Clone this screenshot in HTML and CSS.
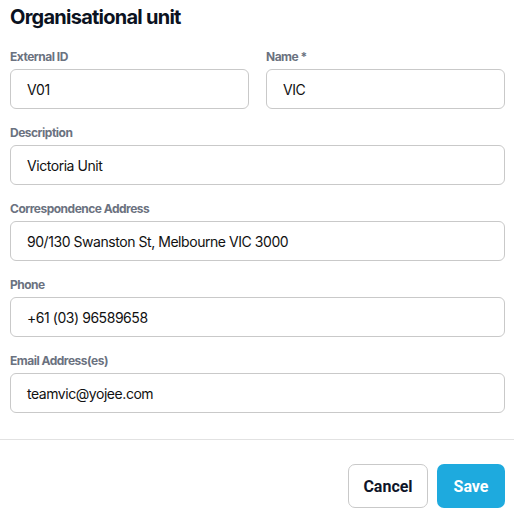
FILE: index.html
```
<!DOCTYPE html>
<html>
<head>
<meta charset="utf-8">
<link rel="stylesheet" href="styles.css">
</head>
<body>
<div class="form">
  <h1 class="title">Organisational unit</h1>
  <div class="row two">
    <div class="field">
      <label class="label">External ID</label>
      <div class="input">V01</div>
    </div>
    <div class="field">
      <label class="label">Name *</label>
      <div class="input">VIC</div>
    </div>
  </div>
  <div class="field">
    <label class="label">Description</label>
    <div class="input">Victoria Unit</div>
  </div>
  <div class="field">
    <label class="label">Correspondence Address</label>
    <div class="input">90/130 Swanston St, Melbourne VIC 3000</div>
  </div>
  <div class="field">
    <label class="label">Phone</label>
    <div class="input">+61 (03) 96589658</div>
  </div>
  <div class="field">
    <label class="label">Email Address(es)</label>
    <div class="input">teamvic@yojee.com</div>
  </div>
</div>
<div class="footer">
  <button class="btn cancel">Cancel</button>
  <button class="btn save">Save</button>
</div>
</body>
</html>
```
FILE: styles.css
```
html, body {
  margin: 0;
  padding: 0;
  background: #fff;
}
body {
  font-family: Inter, "Noto Sans", sans-serif;
  color: #111827;
  width: 514px;
}
.form {
  padding: 5px 9px 0 10px;
  display: flex;
  flex-direction: column;
  gap: 16px;
}
.title {
  margin: 0 0 4px 0;
  font-size: 20px;
  line-height: 24px;
  font-weight: 700;
  letter-spacing: -0.75px;
  color: #0b1221;
}
.row.two {
  display: grid;
  grid-template-columns: 1fr 1fr;
  gap: 17px;
}
.field {
  display: flex;
  flex-direction: column;
  gap: 4px;
}
.label {
  font-size: 12px;
  line-height: 16px;
  font-weight: 700;
  letter-spacing: -0.5px;
  color: #6b7280;
}
.input {
  box-sizing: border-box;
  height: 40px;
  border: 1px solid #c9c9c9;
  border-radius: 6px;
  padding: 0 16px;
  display: flex;
  align-items: center;
  font-size: 14px;
  letter-spacing: -0.45px;
  color: #111;
}
.footer {
  margin-top: 26px;
  border-top: 1px solid #e2e2e2;
  padding: 24px 9px 0 0;
  display: flex;
  justify-content: flex-end;
  gap: 9px;
}
.btn {
  box-sizing: border-box;
  height: 44px;
  border-radius: 7px;
  font-family: Roboto, "Liberation Sans", sans-serif;
  font-weight: 700;
  font-size: 16px;
  padding: 0;
  cursor: pointer;
}
.cancel {
  width: 80px;
  background: #fff;
  border: 1px solid #c9c9c9;
  color: #0f1629;
}
.save {
  width: 68px;
  background: #1eaade;
  border: none;
  color: #fff;
}
```
